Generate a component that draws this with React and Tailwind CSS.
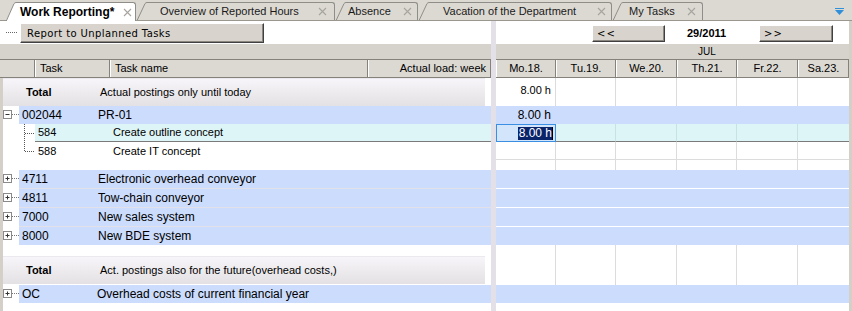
import React from 'react';

// Work reporting screen - tabs, toolbar, task tree on the left, week grid on the right

const tabs = [
  { label: 'Work Reporting*', active: true, m: 'ml-[6px]', w: 'w-[120px]', pl: 'pl-[4px]', pr: 'pr-[3px]' },
  { label: 'Overview of Reported Hours', m: 'ml-px', w: 'w-[188px]', pl: 'pl-[13px]', pr: 'pr-[7px]' },
  { label: 'Absence', m: 'ml-px', w: 'w-[72px]', pl: 'pl-[2px]', pr: 'pr-[5px]' },
  { label: 'Vacation of the Department', m: 'ml-px', w: 'w-[183px]', pl: 'pl-[14px]', pr: 'pr-[5px]' },
  { label: 'My Tasks', m: 'ml-px', w: 'w-[80px]', pl: 'pl-[6px]', pr: 'pr-[6px]' },
];

const days = ['Mo.18.', 'Tu.19.', 'We.20.', 'Th.21.', 'Fr.22.', 'Sa.23.'];
const cols = ['w-[60px]', 'w-[60px]', 'w-[61px]', 'w-[60px]', 'w-[61px]', 'flex-1'];

const projects = [
  { id: '4711', name: 'Electronic overhead conveyor' },
  { id: '4811', name: 'Tow-chain conveyor' },
  { id: '7000', name: 'New sales system' },
  { id: '8000', name: 'New BDE system' },
];

function Cross() {
  return (
    <svg width="9" height="9" viewBox="0 0 9 9" className="shrink-0">
      <path d="M1 1 L8 8 M8 1 L1 8" stroke="#a6a49e" strokeWidth="1.1" />
    </svg>
  );
}

function Tab({ tab }) {
  const { label, active, m, w, pl, pr } = tab;
  return (
    <div className={`flex ${m} ${active ? 'h-[19px] -mb-px' : 'h-[18px]'}`}>
      <svg className="h-full w-[10px] shrink-0" viewBox="0 0 10 18" preserveAspectRatio="none">
        <path d="M0 18 L8 1.6 Q8.8 0.5 10 0.5 L10 18 Z" fill={active ? '#ffffff' : '#dcd9d2'} />
        <path d="M0.3 18 L8 1.6 Q8.8 0.5 10 0.5" fill="none" stroke="#8f8d88" vectorEffect="non-scaling-stroke" />
      </svg>
      <div className={`${w} ${pl} ${pr} flex items-center border-t border-r border-[#8f8d88] rounded-tr-[3px] ${active ? 'bg-white' : 'bg-[#dcd9d2]'}`}>
        <span className={active ? 'font-bold text-[12px] text-black' : 'text-[11px] text-[#1a1a1a]'}>{label}</span>
        <span className="ml-auto flex"><Cross /></span>
      </div>
    </div>
  );
}

function Btn({ w, children }) {
  return (
    <div className={`${w} h-[17px] flex items-center pl-[4px] bg-[#d8d4cd] border border-t-white border-l-white border-r-[#404040] border-b-[#404040] shadow-[inset_-1px_-1px_0_#8a8780] font-['DejaVu_Sans',sans-serif] text-[10px] tracking-[1px]`}>
      {children}
    </div>
  );
}

function TreeBox({ open }) {
  return (
    <svg width="16" height="18" className="shrink-0 bg-white">
      <rect x="0.5" y="4.5" width="8" height="8" fill="#fff" stroke="#8a8a8a" />
      <path d="M2.5 8.5 H6.5" stroke="#333" />
      {!open && <path d="M4.5 6.5 V10.5" stroke="#333" />}
      <path d="M9 8.5 H16" stroke="#777" strokeDasharray="1 1" />
    </svg>
  );
}

function TreeChild({ last }) {
  return (
    <svg width="32" height="18" className="shrink-0 bg-white">
      <path d={last ? 'M21.5 0 V9.5' : 'M21.5 0 V18'} stroke="#555" strokeDasharray="1 1" />
      <path d="M22 9.5 H32" stroke="#555" strokeDasharray="1 1" />
    </svg>
  );
}

function TotalPanel({ label }) {
  return (
    <div className="w-[482px] h-full flex items-center bg-gradient-to-b from-[#f7f5f9] to-[#e3e1e3] border-t border-[#ebe8ee] text-[11px]">
      <span className="w-[97px] shrink-0 pl-[23px] font-bold">Total</span>
      <span>{label}</span>
    </div>
  );
}

function BlueRow({ id, name, sep, open, nameCol = 'w-[76px]' }) {
  return (
    <div className={`flex ${sep ? 'h-[19px]' : 'h-[18px]'}`}>
      <TreeBox open={open} />
      <div className={`flex-1 flex items-center pl-[3px] bg-[#ccdcfc] text-[12px] ${sep ? 'border-b border-[#e2e1ea]' : ''}`}>
        <span className={nameCol}>{id}</span>
        <span>{name}</span>
      </div>
    </div>
  );
}

function Grid({ h, bg, line, first }) {
  return (
    <div className={`flex ${h} ${bg}`}>
      {cols.map((c, i) => (
        <div key={i} className={`${c} h-full flex items-center justify-end ${i < 5 ? `border-r ${line}` : ''}`}>
          {i === 0 ? first : null}
        </div>
      ))}
    </div>
  );
}

export default function App() {
  return (
    <div className="w-[852px] h-[311px] overflow-hidden bg-white flex flex-col font-['Liberation_Sans',Arial,sans-serif] text-black">
      {/* tabs */}
      <div className="h-[21px] shrink-0 flex items-end bg-[#dcd9d2] border-b border-[#9a978f]">
        {tabs.map((t) => (
          <Tab key={t.label} tab={t} />
        ))}
        <svg width="9" height="7" viewBox="0 0 9 7" className="ml-auto mr-[8px] mb-[5px]">
          <path d="M0 0.5 H9" stroke="#2f8fd8" />
          <path d="M0 2 H9 L4.5 7 Z" fill="#2f8fd8" />
        </svg>
      </div>

      <div className="flex flex-1">
        {/* left pane */}
        <div className="w-[491px] flex flex-col">
          <div className="h-[23px] flex items-start">
            <svg width="12" height="23" className="ml-[6px] shrink-0">
              <path d="M0 11.5 H12" stroke="#666" strokeDasharray="1 1" />
            </svg>
            <div className="ml-[2px] mt-[2px] w-[244px] h-[20px] flex items-center pl-[6px] bg-[#d8d4cd] border border-t-white border-l-white border-r-[#404040] border-b-[#404040] shadow-[inset_-1px_-1px_0_#8a8780] font-['DejaVu_Sans',sans-serif] text-[10px] tracking-[0.4px]">
              Report to Unplanned Tasks
            </div>
          </div>
          <div className="h-[15px] bg-[#d6d3cd]" />
          <div className="h-[19px] flex bg-[#dcd9d3] border-y border-[#85827c] text-[11px]">
            <div className="w-[35px] border-r border-[#85827c]" />
            <div className="w-[75px] pl-[4px] flex items-center border-l border-l-white border-r border-r-[#85827c]">Task</div>
            <div className="w-[258px] pl-[4px] flex items-center border-l border-l-white border-r border-r-[#85827c]">Task name</div>
            <div className="flex-1 pr-[4px] flex items-center justify-end border-l border-l-white border-r border-r-[#85827c]">Actual load: week</div>
          </div>

          <div className="flex-1 flex flex-col border-l-[3px] border-[#d4d0c8]">
            <div className="h-[28px]">
              <TotalPanel label="Actual postings only until today" />
            </div>
            <BlueRow id="002044" name="PR-01" open />
            <div className="flex h-[18px]">
              <TreeChild />
              <div className="flex-1 flex items-center pl-[3px] bg-[#def5f7] border-b border-[#7a7a7a] text-[11px]">
                <span className="w-[75px]">584</span>
                <span>Create outline concept</span>
              </div>
            </div>
            <div className="flex h-[18px]">
              <TreeChild last />
              <div className="flex-1 flex items-center pl-[3px] text-[11px]">
                <span className="w-[75px]">588</span>
                <span>Create IT concept</span>
              </div>
            </div>
            <div className="h-[10px]" />
            {projects.map((p, i) => (
              <BlueRow key={p.id} id={p.id} name={p.name} sep={i < projects.length - 1} />
            ))}
            <div className="h-[11px]" />
            <div className="h-[28px]">
              <TotalPanel label="Act. postings also for the future(overhead costs,)" />
            </div>
            <div className="h-px" />
            <BlueRow id="OC" name="Overhead costs of current financial year" nameCol="w-[75px]" />
          </div>
        </div>

        <div className="w-[5px] bg-[#e3e0e8]" />

        {/* right pane */}
        <div className="w-[353px] flex flex-col">
          <div className="h-[23px] flex items-start pt-[4px] pl-[96px]">
            <Btn w="w-[73px]">&lt;&lt;</Btn>
            <div className="w-[94px] h-[17px] flex items-center pl-[22px] font-bold text-[11px]">29/2011</div>
            <Btn w="w-[74px]">&gt;&gt;</Btn>
          </div>
          <div className="h-[15px] bg-[#d6d3cd] flex items-center pl-[202px] text-[10px]">JUL</div>
          <div className="h-[19px] flex bg-[#dcd9d3] border-y border-[#85827c] text-[11px]">
            {days.map((d, i) => (
              <div key={d} className={`${cols[i]} flex items-center justify-center border-l border-l-white border-r border-r-[#85827c]`}>
                {d}
              </div>
            ))}
          </div>

          <div className="flex-1 flex flex-col">
            <Grid h="h-[28px]" bg="bg-white" line="border-[#dcdcdc]" first={<span className="text-[11px] pr-[4px] -mt-[3px]">8.00 h</span>} />
            <Grid h="h-[18px]" bg="bg-[#ccdcfc]" line="border-[#ccdcfc]" first={<span className="text-[12px] pr-[4px]">8.00 h</span>} />
            <div className="flex h-[18px] bg-[#def5f7]">
              <div className="w-[60px] h-full border border-[#3b8fe3] bg-[#d2e5fb] flex items-center justify-end pr-[2px]">
                <span className="bg-[#0a246a] text-white text-[12px] leading-[13px] pl-px">8.00 h</span>
                <span className="w-px h-[13px] bg-black" />
              </div>
              {cols.slice(1).map((c, i) => (
                <div key={i} className={`${c} h-full border-b border-b-[#7a7a7a] ${i < 4 ? 'border-r border-r-[#c8e2e4]' : ''}`} />
              ))}
            </div>
            <div className="flex h-[18px] border-b border-[#dcdcdc]">
              {cols.map((c, i) => (
                <div key={i} className={`${c} h-full ${i < 5 ? 'border-r border-[#dcdcdc]' : ''}`} />
              ))}
            </div>
            <Grid h="h-[10px]" bg="bg-white" line="border-[#dcdcdc]" />
            {projects.map((p, i) => (
              <div key={p.id} className={i < projects.length - 1 ? 'h-[19px] bg-[#ccdcfc] border-b border-white' : 'h-[18px] bg-[#ccdcfc]'} />
            ))}
            <Grid h="h-[40px]" bg="bg-white" line="border-[#dcdcdc]" />
            <div className="h-[18px] bg-[#ccdcfc]" />
          </div>
        </div>

        <div className="w-[3px] bg-[#d4d0c8]" />
      </div>
    </div>
  );
}
